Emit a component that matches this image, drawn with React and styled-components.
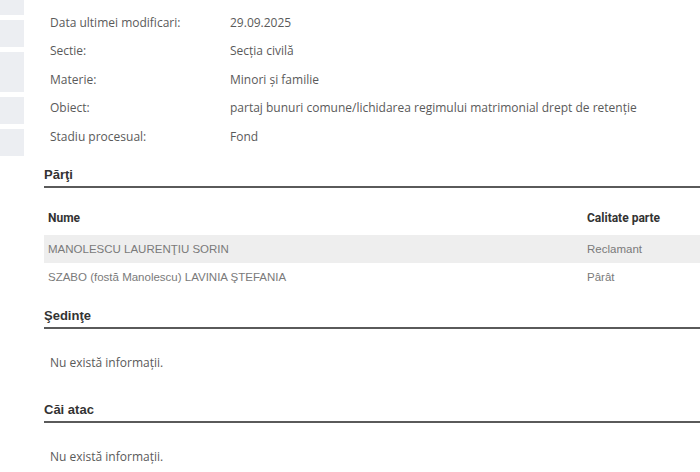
import React from 'react';
import styled, {createGlobalStyle} from 'styled-components';

const GlobalStyle = createGlobalStyle`
  html, body {
    margin: 0;
    padding: 0;
    background: #fff;
    overflow: hidden;
  }
`

const Page = styled.div`
  display: flex;
  width: 700px;
  height: 472px;
  overflow: hidden;
  background: #fff;
`

const Sidebar = styled.div`
  width: 24px;
  flex-shrink: 0;
  display: flex;
  flex-direction: column;
  gap: 5px;
`

const SideTab = styled.div`
  background: #eceef2;
  height: ${props => props.h}px;
`

const Main = styled.div`
  flex: 1;
  padding-left: 20px;
  padding-top: 8px;
  min-width: 0;
`

const InfoList = styled.div`
  padding-left: 6px;
  margin-bottom: 16px;
`

const InfoRow = styled.div`
  display: flex;
  height: 28.5px;
  align-items: center;
  font-family: "Open Sans", sans-serif;
  font-size: 12px;
  color: #5a5a5a;
  white-space: nowrap;
`

const Label = styled.div`
  width: 180px;
  flex-shrink: 0;
`

const Value = styled.div``

const SectionTitle = styled.div`
  font-family: "Liberation Sans", Arial, sans-serif;
  font-weight: bold;
  font-size: 13px;
  color: #333;
  padding-bottom: 4px;
  border-bottom: 2px solid #5a5a5a;
  margin-right: -20px;
`

const Table = styled.div`
  margin-top: 18px;
  margin-right: -40px;
  margin-bottom: 17px;
`

const HeadRow = styled.div`
  display: grid;
  grid-template-columns: 539px 1fr;
  height: 25px;
  padding: 0 0 4px 4px;
  align-items: center;
  font-family: Roboto, sans-serif;
  font-weight: bold;
  font-size: 12px;
  color: #333;
  white-space: nowrap;
`

const PartRow = styled.div`
  display: grid;
  grid-template-columns: 539px 1fr;
  height: 28px;
  align-items: center;
  padding-left: 4px;
  background: ${props => props.shaded ? '#eeeeee' : 'transparent'};
  font-family: "Liberation Sans", Arial, sans-serif;
  font-size: 11.5px;
  color: #7a7a7a;
  white-space: nowrap;
`

const Empty = styled.div`
  font-family: "Open Sans", sans-serif;
  font-size: 12px;
  color: #5a5a5a;
  padding: 25px 6px 0;
  height: 48px;
`

const info = [
  ['Data ultimei modificari:', '29.09.2025'],
  ['Sectie:', 'Secția civilă'],
  ['Materie:', 'Minori și familie'],
  ['Obiect:', 'partaj bunuri comune/lichidarea regimului matrimonial drept de retenție'],
  ['Stadiu procesual:', 'Fond'],
];

const parti = [
  ['MANOLESCU LAURENŢIU SORIN', 'Reclamant'],
  ['SZABO (fostă Manolescu) LAVINIA ŞTEFANIA', 'Pârât'],
];

export default function App() {
  return (
    <Page>
      <GlobalStyle />
      <Sidebar>
        <SideTab h={15} />
        <SideTab h={27} />
        <SideTab h={40} />
        <SideTab h={27} />
        <SideTab h={27} />
      </Sidebar>
      <Main>
        <InfoList>
          {info.map(([k, v]) => (
            <InfoRow key={k}>
              <Label>{k}</Label>
              <Value>{v}</Value>
            </InfoRow>
          ))}
        </InfoList>
        <SectionTitle>Părţi</SectionTitle>
        <Table>
          <HeadRow>
            <div>Nume</div>
            <div>Calitate parte</div>
          </HeadRow>
          {parti.map(([n, c], i) => (
            <PartRow key={n} shaded={i === 0}>
              <div>{n}</div>
              <div>{c}</div>
            </PartRow>
          ))}
        </Table>
        <SectionTitle>Şedinţe</SectionTitle>
        <Empty>Nu există informații.</Empty>
        <SectionTitle>Căi atac</SectionTitle>
        <Empty>Nu există informații.</Empty>
      </Main>
    </Page>
  );
}
